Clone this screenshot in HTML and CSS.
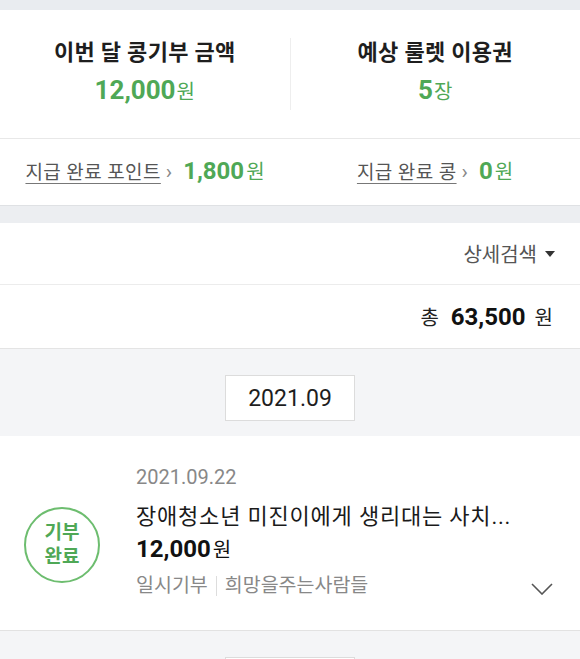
FILE: index.html
```html
<!DOCTYPE html>
<html lang="ko">
<head>
<meta charset="utf-8">
<title>콩기부 내역</title>
<link rel="stylesheet" href="styles.css">
</head>
<body>
<div class="top-gap"></div>
<section class="summary">
  <div class="summary-row">
    <div class="sum-col">
      <div class="sum-title">이번 달 콩기부 금액</div>
      <div class="sum-value"><span class="num">12,000</span><span class="unit">원</span></div>
    </div>
    <div class="sum-col sum-col-right">
      <div class="sum-title">예상 룰렛 이용권</div>
      <div class="sum-value"><span class="num">5</span><span class="unit">장</span></div>
    </div>
  </div>
  <div class="paid-row">
    <div class="paid-col">
      <span class="paid-link">지급 완료 포인트</span><span class="arrow">›</span><span class="paid-num">1,800</span><span class="paid-unit">원</span>
    </div>
    <div class="paid-col">
      <span class="paid-link">지급 완료 콩</span><span class="arrow">›</span><span class="paid-num">0</span><span class="paid-unit">원</span>
    </div>
  </div>
</section>
<div class="band"></div>
<section class="filter">
  <span class="filter-label">상세검색</span><span class="caret"></span>
</section>
<section class="total">
  <span class="total-label">총</span><span class="total-num">63,500</span><span class="total-unit">원</span>
</section>
<div class="month-area">
  <div class="month-box">2021.09</div>
</div>
<article class="item">
  <div class="badge"><span>기부</span><span>완료</span></div>
  <div class="item-body">
    <div class="item-date">2021.09.22</div>
    <div class="item-title">장애청소년 미진이에게 생리대는 사치...</div>
    <div class="item-amount"><span class="amt-num">12,000</span><span class="amt-unit">원</span></div>
    <div class="item-tags">
      <span>일시기부</span><span class="sep"></span><span>희망을주는사람들</span>
      <svg class="chev" width="22" height="12" viewBox="0 0 22 12"><polyline points="1,1 11,11 21,1" fill="none" stroke="#555" stroke-width="1.6"/></svg>
    </div>
  </div>
</article>
<div class="month-area month-area-next">
  <div class="month-box"></div>
</div>
</body>
</html>
```
FILE: styles.css
```css
* { box-sizing: border-box; }
html, body { margin: 0; padding: 0; }
body {
  width: 580px;
  background: #f4f5f7;
  font-family: "Roboto", "Noto Sans CJK KR", sans-serif;
  color: #222;
  overflow: hidden;
}
.top-gap { height: 10px; background: #e9ecf0; }
.summary { background: #fff; border-bottom: 1px solid #dfe1e4; }
.summary-row {
  display: flex;
  padding: 28px 0 28px;
  border-bottom: 1px solid #e8e8e8;
}
.sum-col {
  flex: 1;
  display: flex;
  flex-direction: column;
  align-items: center;
  gap: 4px;
}
.sum-col-right { border-left: 1px solid #eeeeee; }
.sum-title {
  font-size: 22px;
  font-weight: 700;
  line-height: 30px;
  color: #1e1e1e;
  letter-spacing: 0.3px;
}
.sum-value { line-height: 36px; color: #4fa856; display: flex; align-items: baseline; }
.sum-value .num { font-size: 26px; font-weight: 700; }
.sum-value .unit { font-size: 20px; margin-left: 1px; }
.paid-row { display: flex; height: 66px; }
.paid-col {
  flex: 1;
  display: flex;
  align-items: baseline;
  justify-content: center;
  padding-top: 17px;
}
.paid-link {
  font-size: 19px;
  letter-spacing: 0.4px;
  color: #555;
  text-decoration: underline;
  text-underline-offset: 4px;
  text-decoration-color: #777;
}
.arrow { font-size: 21px; color: #888; margin: 0 11px 0 5px; }
.paid-num { font-size: 24px; font-weight: 700; color: #4fa856; }
.paid-unit { font-size: 20px; color: #4fa856; margin-left: 2px; }
.band { height: 17px; background: #eceef1; }
.filter {
  background: #fff;
  height: 62px;
  border-bottom: 1px solid #ececec;
  display: flex;
  align-items: center;
  justify-content: flex-end;
  padding-right: 25px;
}
.filter-label { font-size: 20px; color: #555; }
.caret {
  width: 0; height: 0;
  border-left: 5px solid transparent;
  border-right: 5px solid transparent;
  border-top: 6px solid #333;
  margin-left: 8px;
}
.total {
  background: #fff;
  height: 64px;
  border-bottom: 1px solid #e4e4e4;
  display: flex;
  align-items: center;
  justify-content: flex-end;
  padding-right: 27px;
}
.total-label { font-size: 20px; color: #222; margin-right: 12px; }
.total-num { font-size: 24px; font-weight: 700; color: #111; }
.total-unit { font-size: 20px; color: #222; margin-left: 9px; }
.month-area {
  background: #f4f5f7;
  padding: 26px 0 15px;
  display: flex;
  justify-content: center;
}
.month-box {
  width: 130px;
  height: 46px;
  background: #fff;
  border: 1px solid #dcdcdc;
  display: flex;
  align-items: center;
  justify-content: center;
  font-size: 23px;
  color: #1e1e1e;
}
.item {
  background: #fff;
  border-bottom: 1px solid #e2e2e2;
  display: flex;
  align-items: flex-start;
  padding: 27px 0 28px 24px;
}
.badge {
  width: 76px;
  height: 76px;
  border: 2px solid #6dbd6f;
  border-radius: 50%;
  display: flex;
  flex-direction: column;
  align-items: center;
  justify-content: center;
  color: #4fa856;
  font-size: 19px;
  font-weight: 700;
  line-height: 24px;
  margin-top: 44px;
  margin-right: 36px;
  flex-shrink: 0;
}
.item-body { flex: 1; padding-right: 27px; }
.item-date { font-size: 20px; line-height: 28px; color: #888; }
.item-title { font-size: 22px; letter-spacing: 0.8px; line-height: 32px; margin-top: 10px; color: #1a1a1a; white-space: nowrap; }
.item-amount { line-height: 32px; display: flex; align-items: baseline; color: #111; }
.amt-num { font-size: 24px; font-weight: 700; }
.amt-unit { font-size: 20px; margin-left: 2px; }
.item-tags {
  display: flex;
  align-items: center;
  line-height: 32px;
  margin-top: 4px;
  font-size: 19.5px;
  color: #888;
}
.sep { width: 1px; height: 20px; background: #ddd; margin: 0 8px; }
.chev { margin-left: auto; margin-top: 6px; }
.month-area-next { padding-top: 26px; }
```
